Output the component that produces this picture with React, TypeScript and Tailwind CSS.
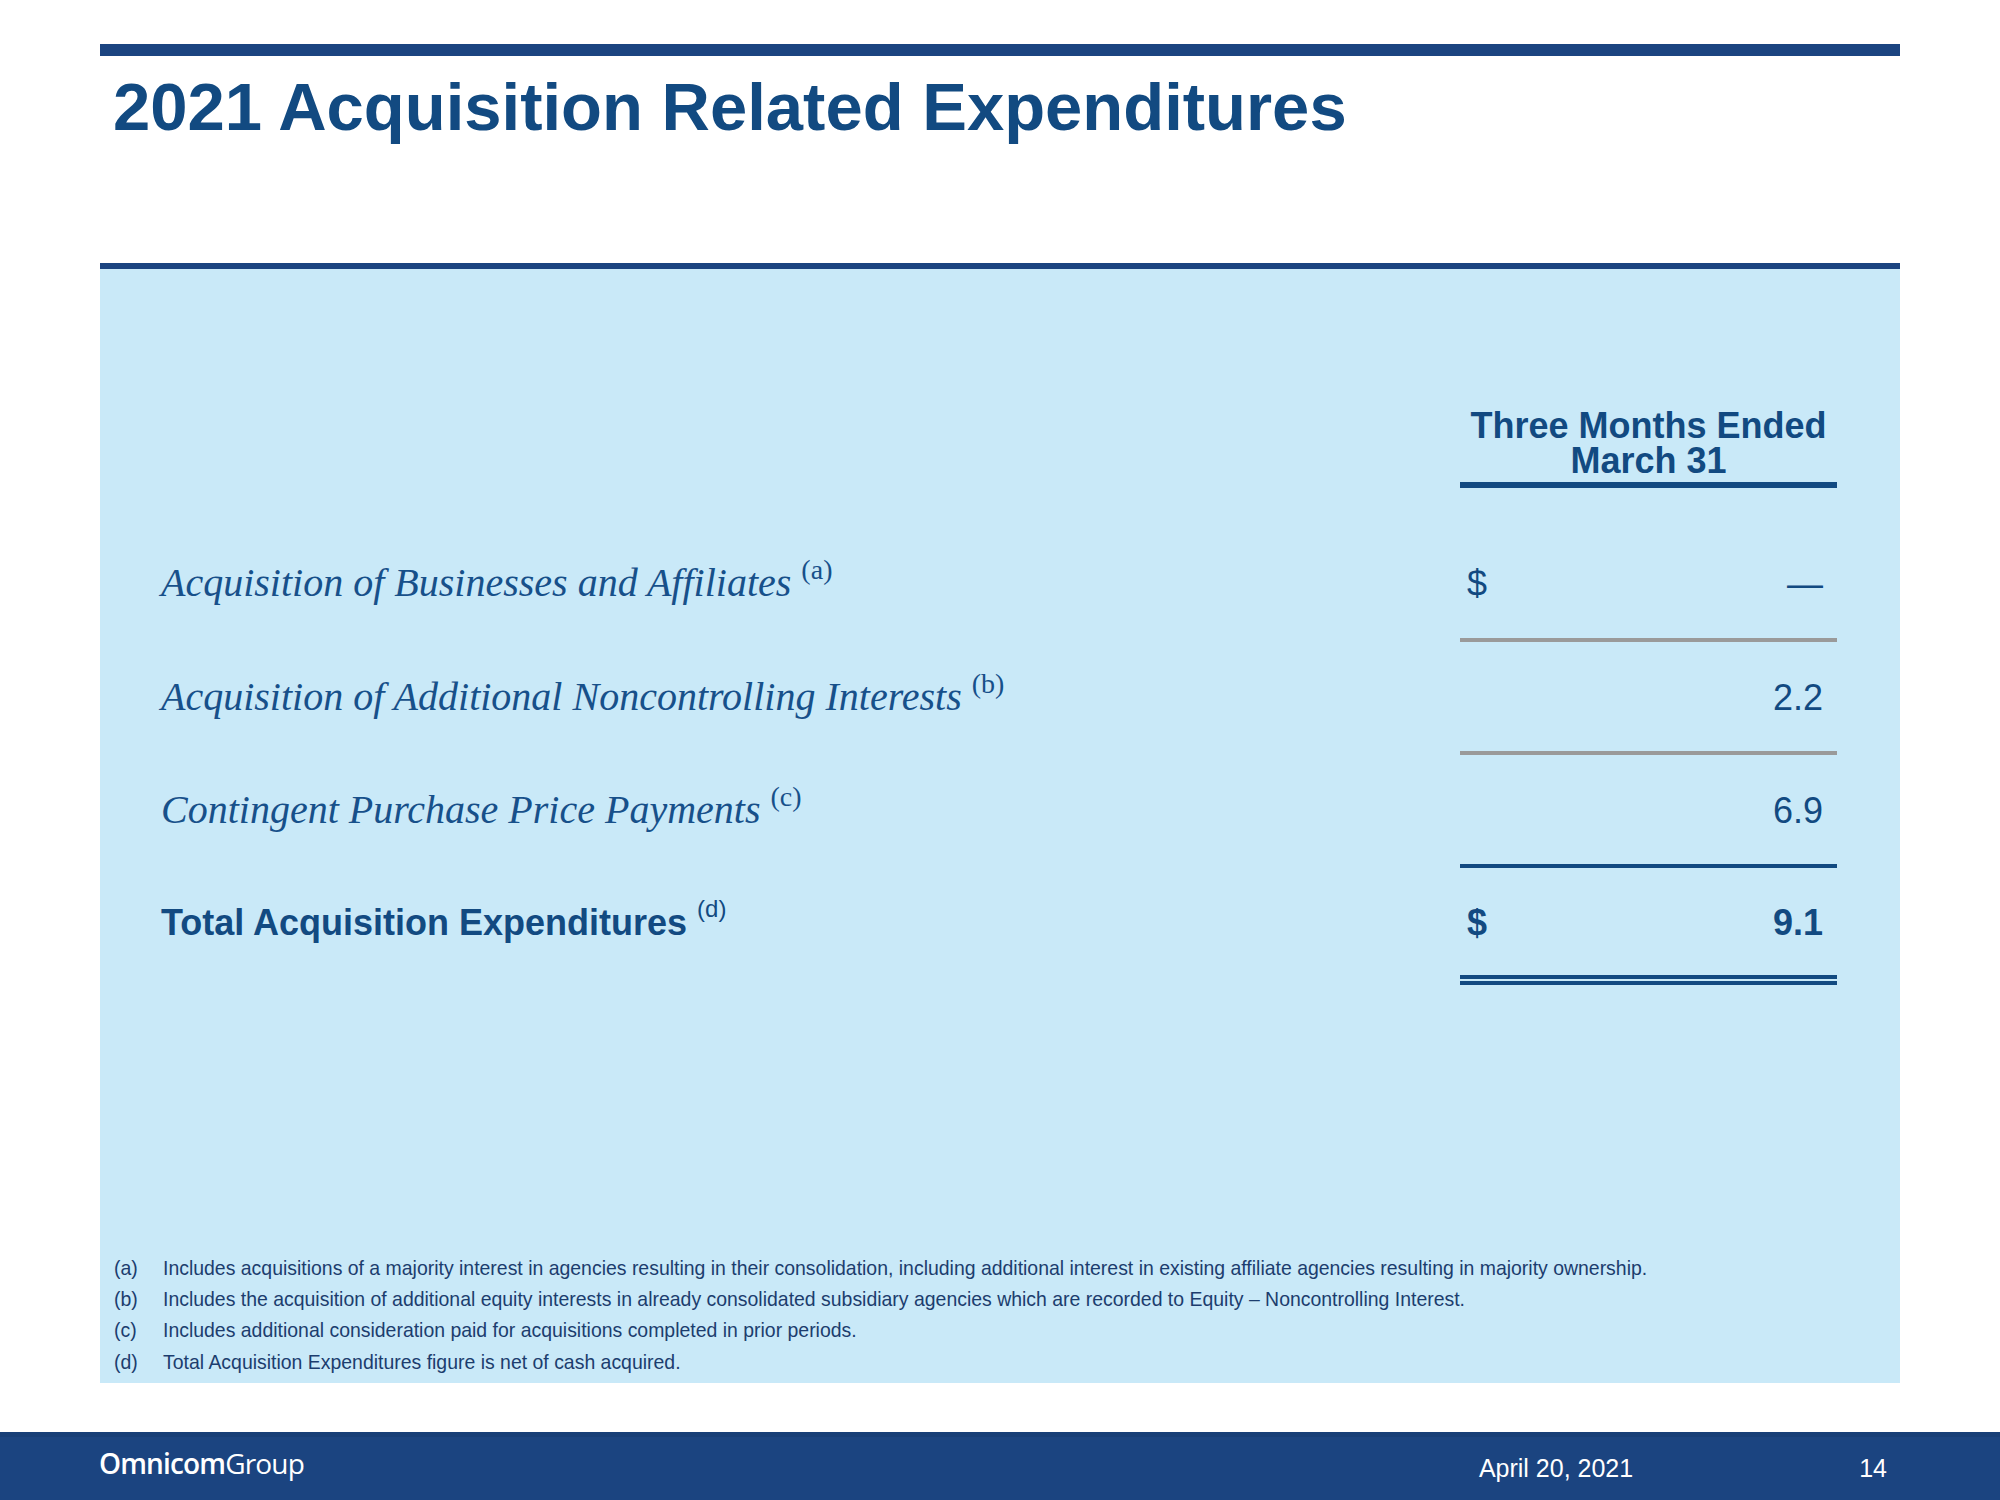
import type { ReactNode } from 'react';

const navy = 'bg-[#1b4480]';

type RowProps = {
  label: ReactNode;
  dollar?: boolean;
  value: string;
  bold?: boolean;
  rowClass: string;
};

function Row({ label, dollar, value, bold, rowClass }: RowProps) {
  return (
    <div className={`flex items-baseline pl-[61px] pr-[63px] ${rowClass}`}>
      <div className="min-w-0 flex-1">{label}</div>
      <div
        className={`flex w-[377px] justify-between pl-[7px] pr-[14px] text-[36px] leading-[40px] text-[#124a81] ${
          bold ? 'font-bold' : ''
        }`}>
        <span className={dollar ? '' : 'invisible'}>$</span>
        <span>{value}</span>
      </div>
    </div>
  );
}

function Rule({ color }: { color: string }) {
  return (
    <div className="flex justify-end pr-[63px]">
      <div className={`h-[4px] w-[377px] ${color}`} />
    </div>
  );
}

function ItalicLabel({ text, note }: { text: string; note: string }) {
  return (
    <span className="font-['Liberation_Serif',serif] text-[40px] leading-[40px] text-[#17508a] italic">
      {text}{' '}
      <span className="relative -top-[17px] text-[28px] leading-none not-italic">
        ({note})
      </span>
    </span>
  );
}

const notes: [string, string][] = [
  [
    'a',
    'Includes acquisitions of a majority interest in agencies resulting in their consolidation, including additional interest in existing affiliate agencies resulting in majority ownership.',
  ],
  [
    'b',
    'Includes the acquisition of additional equity interests in already consolidated subsidiary agencies which are recorded to Equity \u2013 Noncontrolling Interest.',
  ],
  ['c', 'Includes additional consideration paid for acquisitions completed in prior periods.'],
  ['d', 'Total Acquisition Expenditures figure is net of cash acquired.'],
];

export default function App() {
  return (
    <div className="flex h-[1500px] w-[2000px] flex-col bg-white font-['Liberation_Sans',Arial,sans-serif]">
      <div className={`mx-[100px] mt-[44px] h-[12px] ${navy}`} />
      <h1 className="ml-[113px] mt-[17px] text-[67px] font-bold leading-none text-[#124a81]">
        2021 Acquisition Related Expenditures
      </h1>

      <section className="mx-[100px] mt-[123px] flex h-[1120px] flex-col border-t-[6px] border-[#1b4480] bg-[#c9e9f8]">
        <div className="ml-auto mr-[63px] mt-[139px] w-[377px]">
          <p className="text-center text-[36px] font-bold leading-[35px] text-[#124a81]">
            Three Months Ended
            <br />
            March 31
          </p>
          <div className="mt-[4px] h-[6px] bg-[#124a81]" />
        </div>

        <Row
          rowClass="h-[150px] pt-[75px]"
          label={<ItalicLabel text="Acquisition of Businesses and Affiliates" note="a" />}
          dollar
          value={'\u2014'}
        />
        <Rule color="bg-[#9a9a9a]" />
        <Row
          rowClass="h-[109px] pt-[35px]"
          label={<ItalicLabel text="Acquisition of Additional Noncontrolling Interests" note="b" />}
          value="2.2"
        />
        <Rule color="bg-[#9a9a9a]" />
        <Row
          rowClass="h-[109px] pt-[35px]"
          label={<ItalicLabel text="Contingent Purchase Price Payments" note="c" />}
          value="6.9"
        />
        <Rule color="bg-[#124a81]" />
        <Row
          rowClass="h-[107px] pt-[35px]"
          label={
            <span className="text-[36px] font-bold leading-[40px] text-[#124a81]">
              Total Acquisition Expenditures{' '}
              <span className="relative -top-[18px] text-[24px] font-normal leading-none">(d)</span>
            </span>
          }
          dollar
          value="9.1"
          bold
        />
        <div className="flex justify-end pr-[63px]">
          <div className="w-[377px]">
            <div className="h-[4px] bg-[#124a81]" />
            <div className="mt-[2px] h-[4px] bg-[#124a81]" />
          </div>
        </div>

        <div className="mt-auto pb-[5px] pl-[14px] text-[19.45px] leading-[31.3px] text-[#1c3d6e]">
          {notes.map(([k, t]) => (
            <div key={k} className="flex">
              <span className="w-[49px] shrink-0">({k})</span>
              <span>{t}</span>
            </div>
          ))}
        </div>
      </section>

      <footer className={`mt-auto flex h-[68px] items-start border-t-[5px] border-[#183f77] ${navy} text-white`}>
        <div className="ml-[99px] mt-[12px] font-['Open_Sans',sans-serif] text-[28px] leading-none tracking-[-0.03em]">
          <span className="font-semibold">Omnicom</span>
          <span className="font-normal">Group</span>
        </div>
        <span className="ml-auto mt-[19px] text-[25px] leading-none">April 20, 2021</span>
        <span className="ml-[226px] mr-[113px] mt-[19px] text-[25px] leading-none">14</span>
      </footer>
    </div>
  );
}
